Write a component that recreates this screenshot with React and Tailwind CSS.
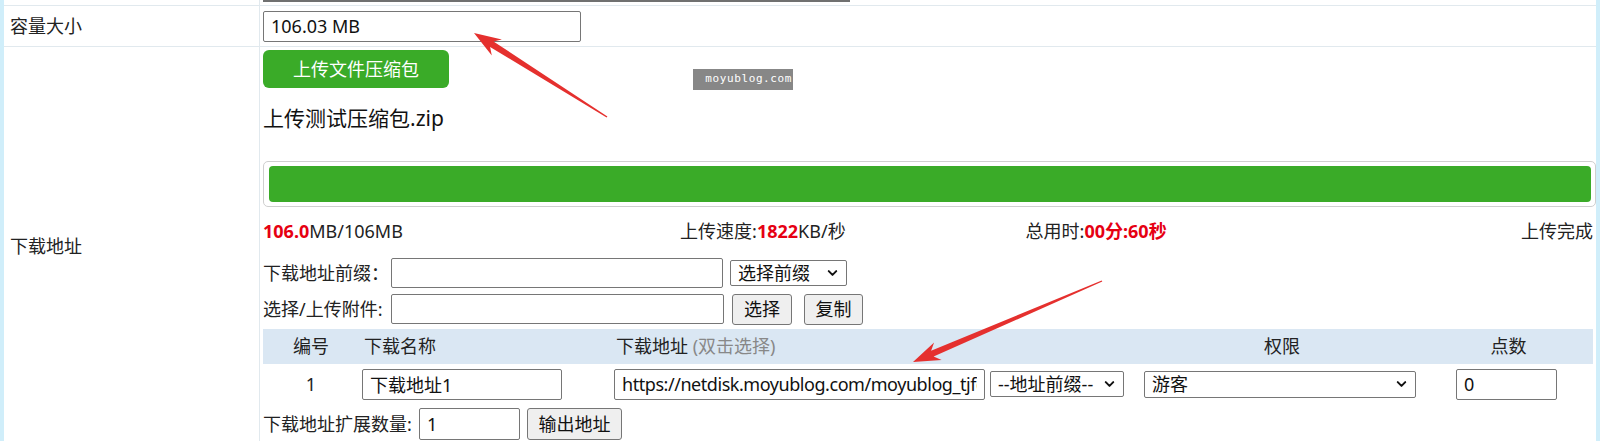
import { ChevronDown } from 'lucide-react';

// red annotation arrow: thin tail widening into a barbed head
function arrowPoints(tip, tail, headLen = 27, headHalf = 9.5, neckHalf = 3.2, tailHalf = 0.7) {
  const dx = tip[0] - tail[0];
  const dy = tip[1] - tail[1];
  const len = Math.hypot(dx, dy);
  const ux = dx / len;
  const uy = dy / len;
  const nx = -uy;
  const ny = ux;
  const base = [tip[0] - ux * headLen, tip[1] - uy * headLen];
  const neck = [tip[0] - ux * headLen * 0.78, tip[1] - uy * headLen * 0.78];
  const pts = [
    [tail[0] + nx * tailHalf, tail[1] + ny * tailHalf],
    [neck[0] + nx * neckHalf, neck[1] + ny * neckHalf],
    [base[0] + nx * headHalf, base[1] + ny * headHalf],
    tip,
    [base[0] - nx * headHalf, base[1] - ny * headHalf],
    [neck[0] - nx * neckHalf, neck[1] - ny * neckHalf],
    [tail[0] - nx * tailHalf, tail[1] - ny * tailHalf],
  ];
  return pts.map((p) => `${p[0].toFixed(1)},${p[1].toFixed(1)}`).join(' ');
}

function Field({ value = '', className = '' }) {
  return (
    <input
      readOnly
      value={value}
      className={`border border-[#767676] rounded-[2px] bg-white px-[7px] text-[18px] text-[#111] outline-none ${className}`}
    />
  );
}

function Select({ label, className = '' }) {
  return (
    <div className={`relative flex items-center border border-[#767676] rounded-[2px] bg-white pl-[7px] text-[18px] text-[#111] ${className}`}>
      <span className="whitespace-nowrap">{label}</span>
      <ChevronDown className="absolute right-[6px] top-1/2 -translate-y-1/2 w-[15px] h-[15px] text-[#111]" strokeWidth={3.2} />
    </div>
  );
}

function Btn({ children, className = '' }) {
  return (
    <button
      type="button"
      className={`border border-[#767676] rounded-[3px] bg-[#efefef] text-[18px] text-[#111] ${className}`}
    >
      {children}
    </button>
  );
}

export default function App() {
  return (
    <div className="relative h-[441px] overflow-hidden bg-white text-[18px] text-[#222] font-['Noto_Sans','Noto_Sans_CJK_SC',sans-serif]">
      <div className="border-x-4 border-[#d0eefa]">
        {/* tail of the previous row */}
        <div className="grid grid-cols-[256px_1fr] h-[6px] border-b border-[#e1e9ee]">
          <div className="border-r border-[#e1e9ee]" />
          <div className="pl-[3px]">
            <div className="h-[2px] w-[587px] bg-[#707070]" />
          </div>
        </div>

        {/* 容量大小 */}
        <div className="grid grid-cols-[256px_1fr] h-[41px] border-b border-[#e1e9ee]">
          <div className="flex items-center pl-[6px] border-r border-[#e1e9ee]">容量大小</div>
          <div className="flex items-center pl-[3px]">
            <Field value="106.03 MB" className="w-[318px] h-[31px]" />
          </div>
        </div>

        {/* 下载地址 */}
        <div className="grid grid-cols-[256px_1fr]">
          <div className="flex items-center pl-[6px] border-r border-[#e1e9ee]">下载地址</div>
          <div className="pl-[3px] pt-[3px] pb-[2px]">
            <button
              type="button"
              className="w-[186px] h-[38px] rounded-[6px] bg-[#3aab28] text-white text-[18px]"
            >
              上传文件压缩包
            </button>
            <div className="mt-[12px] h-[36px] leading-[36px] text-[21px] text-[#111]">上传测试压缩包.zip</div>

            <div className="mt-[25px] h-[46px] border border-[#cfcfcf] rounded-[5px] p-[4px] pl-[5px]">
              <div className="h-full w-full rounded-[4px] bg-[#3aab28]" />
            </div>

            <div className="grid grid-cols-4 items-center h-[48px] text-[#222]">
              <div>
                <span className="font-bold text-[#e60012]">106.0</span>MB/106MB
              </div>
              <div className="text-center">
                上传速度:<span className="font-bold text-[#e60012]">1822</span>KB/秒
              </div>
              <div className="text-center">
                总用时:<span className="font-bold text-[#e60012]">00分:60秒</span>
              </div>
              <div className="text-right pr-[3px]">上传完成</div>
            </div>

            <div className="mt-[2px] flex items-center h-[32px]">
              <span className="w-[128px] whitespace-nowrap">下载地址前缀：</span>
              <Field className="w-[332px] h-[30px]" />
              <Select label="选择前缀" className="ml-[7px] w-[117px] h-[26px]" />
            </div>

            <div className="mt-[4px] flex items-center h-[32px]">
              <span className="w-[128px] whitespace-nowrap">选择/上传附件:</span>
              <Field className="w-[333px] h-[30px]" />
              <Btn className="ml-[8px] w-[60px] h-[31px]">选择</Btn>
              <Btn className="ml-[12px] w-[59px] h-[31px]">复制</Btn>
            </div>

            <div className="mt-[4px] grid grid-cols-[96px_251px_530px_284px_1fr] items-center h-[35px] bg-[#dae7f3] text-[#222] mr-[3px]">
              <div className="text-center">编号</div>
              <div className="pl-[5px]">下载名称</div>
              <div className="pl-[6px]">
                下载地址 <span className="text-[#888]">(双击选择)</span>
              </div>
              <div className="text-center">权限</div>
              <div className="text-center">点数</div>
            </div>

            <div className="grid grid-cols-[96px_251px_530px_284px_1fr] items-center h-[40px] mr-[3px]">
              <div className="text-center">1</div>
              <div className="pl-[3px]">
                <Field value="下载地址1" className="w-[200px] h-[31px]" />
              </div>
              <div className="pl-[4px] flex items-center">
                <Field
                  value="https://netdisk.moyublog.com/moyublog_tjfg"
                  className="w-[371px] h-[31px] px-[6px] tracking-[-0.45px]"
                />
                <Select label="--地址前缀--" className="ml-[5px] w-[134px] h-[26px]" />
              </div>
              <div className="pl-[4px]">
                <Select label="游客" className="w-[272px] h-[27px]" />
              </div>
              <div className="flex justify-center pr-[4px]">
                <Field value="0" className="w-[101px] h-[31px]" />
              </div>
            </div>

            <div className="flex items-center h-[40px]">
              <span className="w-[156px] whitespace-nowrap">下载地址扩展数量:</span>
              <Field value="1" className="w-[101px] h-[32px]" />
              <Btn className="ml-[7px] w-[95px] h-[32px]">输出地址</Btn>
            </div>
          </div>
        </div>
      </div>

      {/* watermark */}
      <div className="absolute left-[693px] top-[69px] w-[100px] h-[21px] bg-[#878787] flex items-center justify-end pr-[1px] text-white text-[11px] font-['DejaVu_Sans_Mono',monospace] tracking-[0.6px]">
        moyublog.com
      </div>

      {/* annotation arrows */}
      <svg className="absolute inset-0 pointer-events-none" width="1600" height="441">
        <polygon points={arrowPoints([474, 33], [607, 117])} fill="#e5302e" />
        <polygon points={arrowPoints([913, 362], [1102, 281])} fill="#e5302e" />
      </svg>
    </div>
  );
}
